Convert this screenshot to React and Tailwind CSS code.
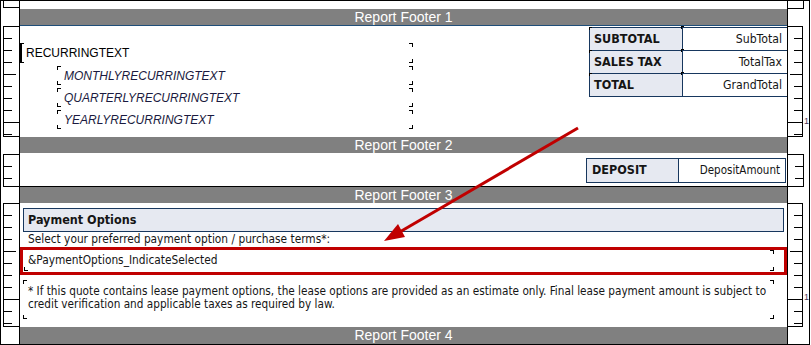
import React from "react";

const TICKS = {
  s: "w-[8px]",
  h: "w-[12px]",
  f: "w-full",
};

const tah = "font-['DejaVu_Sans_Condensed','DejaVu_Sans',sans-serif]";
const arial = "font-['Liberation_Sans',Arial,sans-serif]";

// ruler box for one report section, left or right of the design area
function Ruler({ side, ticks, tail, mt = "", label }) {
  const box =
    side === "left"
      ? "w-[16px] border-l border-t border-b border-black flex flex-col items-start"
      : "w-[16px] border-r border-t border-b border-black flex flex-col items-end";
  return (
    <div
      className={
        side === "left"
          ? "w-[19px] shrink-0 border-r border-black pl-[2px]"
          : "w-[22px] shrink-0 border-l border-black flex"
      }
    >
      <div className={`${box} ${mt}`}>
        {ticks.split("").map((t, i) => (
          <div key={i} className={`h-[12px] shrink-0 border-b border-black ${TICKS[t]}`} />
        ))}
        <div className={tail} />
      </div>
      {side === "right" && (
        <div className={`flex-1 pl-[1px] ${label || ""}`}>
          {label && <span className={`${arial} block text-[9px] leading-[10px] text-[#4a3a5a]`}>1</span>}
        </div>
      )}
    </div>
  );
}

function Band({ title, h = "h-[16px]" }) {
  return (
    <div className={`flex ${h}`}>
      <div className="w-[19px] shrink-0 border-r border-black" />
      <div className={`flex-1 bg-[#808080] text-center text-white text-[14px] leading-[16px] ${arial}`}>
        {title}
      </div>
      <div className="w-[22px] shrink-0 border-l border-black" />
    </div>
  );
}

// little corner marks the designer draws on each text box
function Corners({ tl, tr, bl, br }) {
  return (
    <>
      {tl && <span className="absolute left-0 top-0 w-[4px] h-[4px] border-l border-t border-black" />}
      {tr && <span className="absolute right-0 top-0 w-[4px] h-[4px] border-r border-t border-black" />}
      {bl && <span className="absolute left-0 bottom-0 w-[4px] h-[4px] border-l border-b border-black" />}
      {br && <span className="absolute right-0 bottom-0 w-[4px] h-[4px] border-r border-b border-black" />}
    </>
  );
}

const totals = [
  ["SUBTOTAL", "SubTotal"],
  ["SALES TAX", "TotalTax"],
  ["TOTAL", "GrandTotal"],
];

const sub = ["MONTHLYRECURRINGTEXT", "QUARTERLYRECURRINGTEXT", "YEARLYRECURRINGTEXT"];

export default function App() {
  return (
    <div className="relative w-[810px] h-[345px] border border-black bg-white text-[#151515] overflow-hidden">
      {/* top remnant of previous section */}
      <div className="flex h-[8px]">
        <div className="w-[19px] shrink-0 border-r border-black pl-[2px]">
          <div className="w-[16px] h-[7px] border-l border-b border-black" />
        </div>
        <div className="flex-1" />
        <div className="w-[22px] shrink-0 border-l border-black">
          <div className="w-[16px] h-[8px] border-r border-b border-black" />
        </div>
      </div>

      <Band title="Report Footer 1" />

      {/* Report Footer 1 */}
      <div className="flex h-[112px]">
        <Ruler side="left" ticks="ssshsssfs" tail="h-[1px]" mt="mt-[1px]" />
        <div className="flex-1 border-t border-[#1f4e79] flex justify-between">
          <div className="w-[393px] pt-[17px] flex flex-col gap-[3px]">
            <div className="relative h-[20px] flex items-center pl-[6px]">
              <span className="absolute left-0 top-0 bottom-0 w-[4px] border-l-2 border-t border-b border-black" />
              <span className="absolute right-0 top-0 w-[4px] h-[4px] border-r border-t border-black" />
              <span className="absolute right-0 bottom-0 w-[4px] h-[4px] border-r border-b border-black" />
              <span className={`${arial} text-[12px] leading-[14px] text-black`}>RECURRINGTEXT</span>
            </div>
            {sub.map((s) => (
              <div key={s} className="relative ml-[37px] h-[19px] flex items-center pl-[7px]">
                <Corners tl tr bl br />
                <span className={`${arial} italic text-[12px] leading-[14px] text-[#1a1a40]`}>{s}</span>
              </div>
            ))}
          </div>

          <div className="mt-[1px] self-start w-[198px] border-t border-[#17375e]">
            {totals.map(([l, v]) => (
              <div key={l} className="flex h-[23px] border-b border-[#17375e]">
                <div
                  className={`relative w-[94px] border-l border-r border-[#17375e] bg-[#e6e9f1] pl-[4px] flex items-center font-bold text-[12.5px] ${tah}`}
                >
                  <span className="absolute left-[-1px] top-[-1px] w-[3px] h-[3px] border-l border-t border-black" />
                  <span className="absolute right-[-2px] top-[-2px] w-[3px] h-[3px] border-l border-t border-black" />
                  {l}
                </div>
                <div className={`flex-1 flex items-center justify-end pr-[5px] text-[12.2px] ${tah}`}>{v}</div>
              </div>
            ))}
          </div>
        </div>
        <Ruler side="right" ticks="ssshsssfs" tail="h-[1px]" mt="mt-[1px]" label="pt-[91px]" />
      </div>

      <Band title="Report Footer 2" />

      {/* Report Footer 2 */}
      <div className="flex h-[34px]">
        <Ruler side="left" ticks="ss" tail="h-[7px]" mt="mt-[1px]" />
        <div className="flex-1 border-b border-black flex justify-end pt-[5px] pr-[1px]">
          <div className="w-[200px] h-[25px] border border-[#17375e] flex">
            <div className={`w-[92px] border-r border-[#17375e] bg-[#e6e9f1] pl-[5px] flex items-center font-bold text-[12.5px] ${tah}`}>
              DEPOSIT
            </div>
            <div className={`flex-1 flex items-center justify-end pr-[5px] text-[11.5px] ${tah}`}>DepositAmount</div>
          </div>
        </div>
        <Ruler side="right" ticks="ss" tail="h-[7px]" mt="mt-[1px]" />
      </div>

      <Band title="Report Footer 3" />

      {/* Report Footer 3 */}
      <div className="flex h-[124px]">
        <Ruler side="left" ticks="ssshsssfss" tail="h-[2px]" />
        <div className={`flex-1 flex flex-col ${tah}`}>
          <div className="ml-[3px] mt-[5px] w-[761px] h-[24px] border border-[#17375e] bg-[#e6e9f1] pl-[4px] flex items-center font-bold text-[12.5px]">
            Payment Options
          </div>
          <div className="h-[15px] pl-[8px] text-[11.8px] leading-[15px]">
            Select your preferred payment option / purchase terms*:
          </div>
          <div className="h-[28px] border-[3px] border-[#c00000] pl-[1px]">
            <div className="relative w-[750px] h-[21px] pl-[4px] flex items-center text-[11.8px]">
              <Corners tr bl br />
              &amp;PaymentOptions_IndicateSelected
            </div>
          </div>
          <div className="relative mt-[5px] ml-[3px] w-[751px] h-[39px] pl-[5px] pt-[5px] text-[11.7px] leading-[13px]">
            <Corners tl tr bl br />
            <div className="whitespace-nowrap">
              * If this quote contains lease payment options, the lease options are provided as an estimate only. Final lease payment amount is subject to
            </div>
            <div className="whitespace-nowrap">credit verification and applicable taxes as required by law.</div>
          </div>
        </div>
        <Ruler side="right" ticks="ssshsssfss" tail="h-[2px]" label="pt-[89px]" />
      </div>

      <Band title="Report Footer 4" h="h-[17px]" />

      {/* callout arrow */}
      <svg className="absolute left-0 top-0 pointer-events-none" width="811" height="345">
        <line x1="577" y1="127" x2="397" y2="232" stroke="#c00000" strokeWidth="3" />
        <polygon points="383,240 404,236 397,223" fill="#c00000" />
      </svg>
    </div>
  );
}
